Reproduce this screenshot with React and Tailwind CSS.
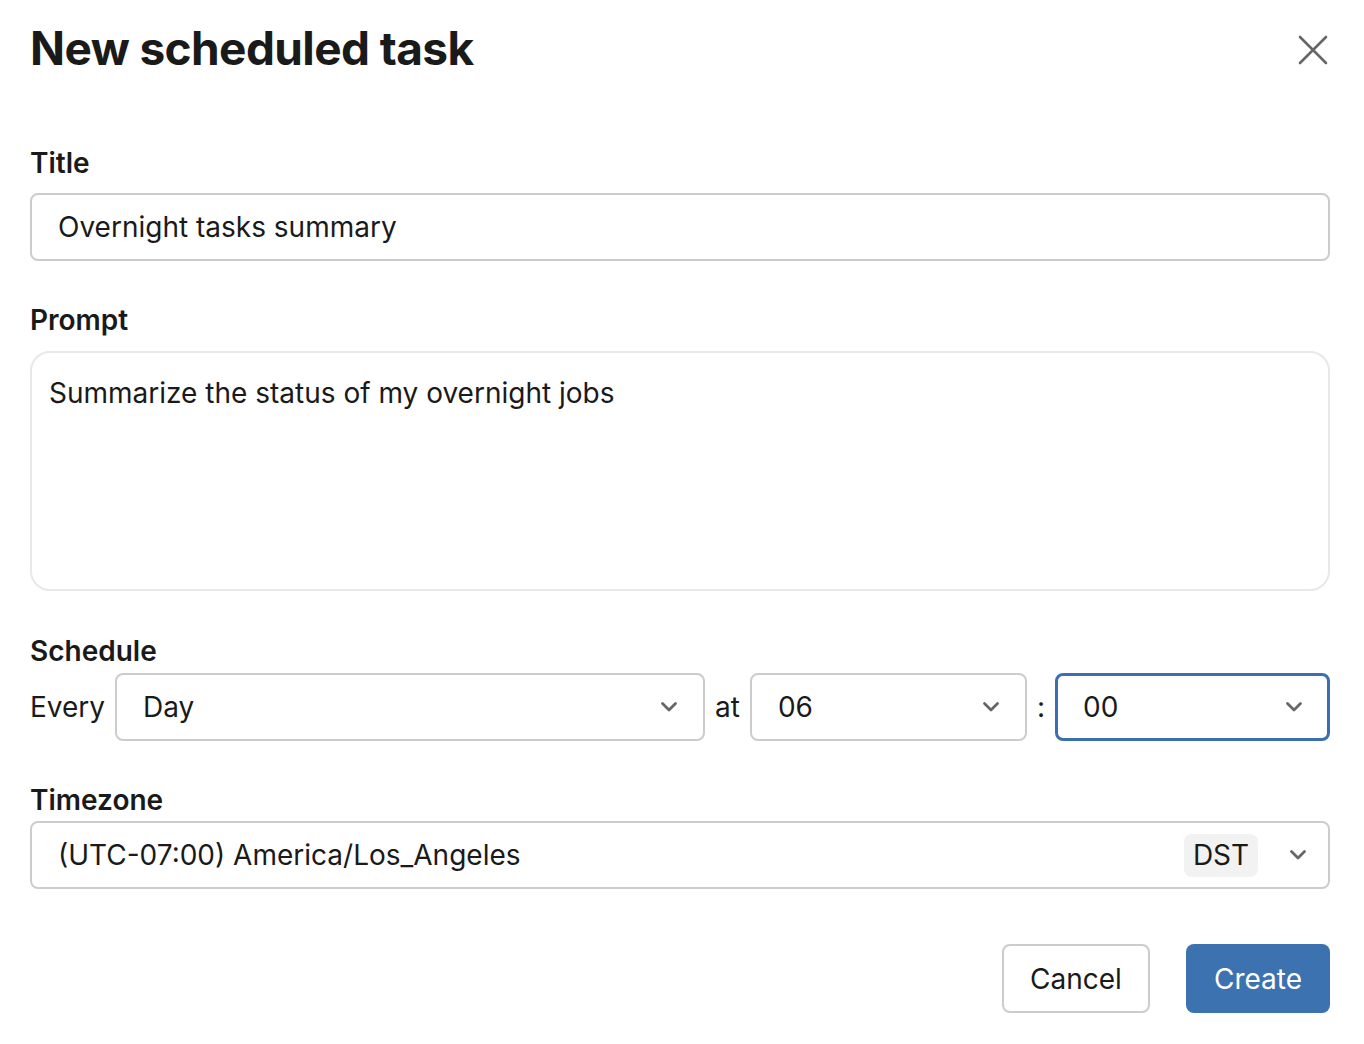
import React, { useState } from "react";

function Chevron() {
  return (
    <svg width="18" height="12" viewBox="0 0 18 12" className="shrink-0 text-[#666]">
      <path d="M2.5 2.5l6.5 6.5 6.5-6.5" fill="none" stroke="currentColor" strokeWidth="2.8" strokeLinecap="round" strokeLinejoin="round" />
    </svg>
  );
}

function SelectBox({ value, className = "", focused = false }) {
  return (
    <div
      className={
        "flex h-[68px] items-center justify-between rounded-[8px] bg-white " +
        (focused ? "border-[3px] border-[#3b6fb0] pl-[25px] pr-[24px]" : "border-2 border-[#cccccc] pl-[26px] pr-[25px]") +
        " " +
        className
      }
    >
      <span className="text-[28px] leading-[36px]">{value}</span>
      <Chevron />
    </div>
  );
}

function Label({ children, className = "" }) {
  return <div className={"text-[28px] font-semibold leading-[36px] " + className}>{children}</div>;
}

export default function App() {
  const [title, setTitle] = useState("Overnight tasks summary");
  const [prompt, setPrompt] = useState("Summarize the status of my overnight jobs");

  return (
    <div className="min-h-screen bg-white font-['Inter',sans-serif] text-[#1a1a1a]">
      <div className="pl-[30px] pr-[34px] pt-[20px]">
        <div className="flex items-start justify-between">
          <h1 className="text-[46px] font-bold leading-[56px] tracking-[-0.6px]">New scheduled task</h1>
          <button className="mt-[14px] mr-[1px] text-[#666]">
            <svg width="32" height="32" viewBox="0 0 32 32">
              <path d="M3 3l26 26M29 3L3 29" stroke="currentColor" strokeWidth="2.6" strokeLinecap="round" />
            </svg>
          </button>
        </div>

        {/* title */}
        <Label className="mt-[69px]">Title</Label>
        <input
          value={title}
          onChange={(e) => setTitle(e.target.value)}
          className="mt-[12px] block h-[68px] w-full rounded-[8px] border-2 border-[#cccccc] px-[26px] text-[28px] outline-none"
        />

        {/* prompt */}
        <Label className="mt-[41px]">Prompt</Label>
        <textarea
          value={prompt}
          onChange={(e) => setPrompt(e.target.value)}
          className="mt-[13px] block h-[240px] w-full resize-none rounded-[20px] border-2 border-[#e8e8e8] px-[17px] pt-[22px] text-[28px] leading-[36px] outline-none"
        />

        {/* schedule */}
        <Label className="mt-[42px]">Schedule</Label>
        <div className="mt-[4px] flex items-center gap-[10px]">
          <span className="text-[28px] leading-[36px]">Every</span>
          <SelectBox value="Day" className="flex-1" />
          <span className="text-[28px] leading-[36px]">at</span>
          <SelectBox value="06" className="w-[277px]" />
          <span className="text-[28px] leading-[36px]">:</span>
          <SelectBox value="00" className="w-[275px]" focused />
        </div>

        {/* timezone */}
        <Label className="mt-[41px]">Timezone</Label>
        <div className="mt-[3px] flex h-[68px] items-center justify-between rounded-[8px] border-2 border-[#cccccc] pl-[26px] pr-[21px]">
          <span className="text-[28px] leading-[36px]">(UTC-07:00) America/Los_Angeles</span>
          <div className="flex items-center gap-[31px]">
            <span className="flex h-[43px] w-[74px] items-center justify-center rounded-[8px] bg-[#f2f2f2] text-[28px]">DST</span>
            <Chevron />
          </div>
        </div>

        <div className="mt-[55px] flex justify-end gap-[36px]">
          <button className="h-[69px] w-[148px] rounded-[8px] border-2 border-[#cccccc] bg-white text-[28px]">Cancel</button>
          <button className="h-[69px] w-[144px] rounded-[8px] bg-[#3d72b0] text-[28px] text-white">Create</button>
        </div>
      </div>
    </div>
  );
}
